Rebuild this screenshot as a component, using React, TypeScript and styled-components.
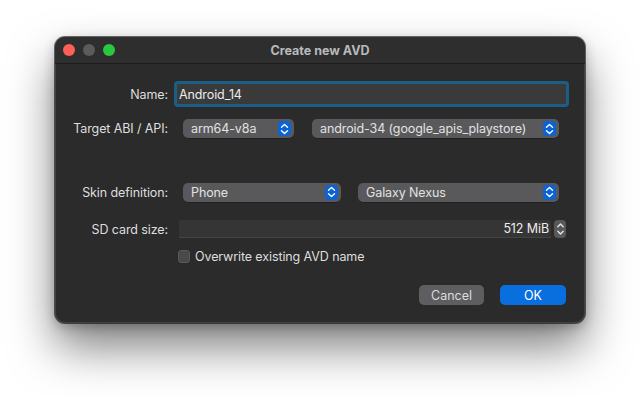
import React from "react";
import styled, { createGlobalStyle } from "styled-components";

const GlobalStyle = createGlobalStyle`
  html, body {
    margin: 0;
    padding: 0;
    background: #ffffff;
  }
  body {
    font-family: Inter, "Liberation Sans", sans-serif;
    -webkit-font-smoothing: antialiased;
  }
`;

const Page = styled.div`
  display: flex;
  justify-content: center;
  padding-top: 37px;
  height: 396px;
  box-sizing: border-box;
`;

const Window = styled.div`
  width: 530px;
  height: 286px;
  box-sizing: border-box;
  display: flex;
  flex-direction: column;
  background: #2b2b2c;
  border-radius: 10px;
  box-shadow: 0 0 0 1px rgba(0, 0, 0, 0.55), inset 0 0 0 1px rgba(255, 255, 255, 0.1),
    0 24px 46px rgba(0, 0, 0, 0.5), 0 4px 12px rgba(0, 0, 0, 0.25);
  overflow: hidden;
`;

const TitleBar = styled.div`
  position: relative;
  height: 26px;
  flex: none;
  display: flex;
  align-items: center;
  justify-content: center;
  background: #2e2e2f;
  border-bottom: 1px solid #1b1b1b;
`;

const Lights = styled.div`
  position: absolute;
  left: 8px;
  top: 7px;
  display: flex;
  gap: 8px;
`;

const Light = styled.span<{ $color: string }>`
  width: 12px;
  height: 12px;
  border-radius: 50%;
  background: ${(p) => p.$color};
`;

const Title = styled.div`
  font-size: 12.5px;
  font-weight: 700;
  color: #b9b9b9;
`;

const Body = styled.div`
  flex: 1;
  display: flex;
  flex-direction: column;
  padding-right: 16px;
`;

const Row = styled.div<{ $top: number; $height: number }>`
  display: grid;
  grid-template-columns: 113px 1fr;
  column-gap: 6px;
  align-items: center;
  margin-top: ${(p) => p.$top}px;
  height: ${(p) => p.$height}px;
`;

const Label = styled.div`
  text-align: right;
  font-size: 12.5px;
  letter-spacing: -0.1px;
  color: #dedede;
  white-space: nowrap;
`;

const Fields = styled.div<{ $inset: number; $gap?: number }>`
  display: flex;
  align-items: center;
  gap: ${(p) => p.$gap ?? 0}px;
  padding-left: ${(p) => p.$inset}px;
  height: 100%;
`;

const FocusRing = styled.div`
  flex: 1;
  height: 26px;
  box-sizing: border-box;
  border: 3px solid #1c5e85;
  border-radius: 4px;
  background: #3a3a3b;
  display: flex;
  align-items: center;
  padding-left: 2px;
`;

const TextValue = styled.span`
  font-size: 12.5px;
  letter-spacing: -0.1px;
  color: #ececec;
`;

const Select = styled.div<{ $width: number }>`
  width: ${(p) => p.$width}px;
  height: 19px;
  box-sizing: border-box;
  display: flex;
  align-items: center;
  justify-content: space-between;
  padding: 0 3px 0 8px;
  background: #59595b;
  border-radius: 5px;
  box-shadow: 0 0.5px 0 rgba(0, 0, 0, 0.4);
  font-size: 12.5px;
  letter-spacing: -0.1px;
  color: #e2e2e2;
  white-space: nowrap;
`;

const ChevronBox = styled.span`
  flex: none;
  width: 13px;
  height: 15px;
  border-radius: 4px;
  background: #0b64d6;
  display: flex;
  align-items: center;
  justify-content: center;
`;

const NumberField = styled.div`
  flex: 1;
  height: 18px;
  box-sizing: border-box;
  display: flex;
  align-items: center;
  justify-content: flex-end;
  padding-right: 2px;
  background: #353536;
  border-bottom: 1px solid #444446;
`;

const Stepper = styled.div`
  width: 12px;
  height: 18px;
  margin-left: 3px;
  margin-right: 3px;
  border-radius: 4px;
  background: #58585a;
  display: flex;
  align-items: center;
  justify-content: center;
`;

const CheckRow = styled.div`
  display: flex;
  align-items: center;
  gap: 5px;
  padding-left: 4px;
`;

const CheckBox = styled.span`
  width: 12px;
  height: 13px;
  box-sizing: border-box;
  border-radius: 3px;
  background: #4a4a4c;
  border: 1px solid #58585a;
`;

const Footer = styled.div`
  display: flex;
  justify-content: flex-end;
  gap: 16px;
  margin-top: 22px;
  padding-right: 3px;
`;

const Button = styled.div<{ $primary?: boolean }>`
  width: ${(p) => (p.$primary ? 66 : 65)}px;
  height: 20px;
  border-radius: 5px;
  display: flex;
  align-items: center;
  justify-content: center;
  font-size: 12.5px;
  color: ${(p) => (p.$primary ? "#ffffff" : "#dcdcdc")};
  background: ${(p) => (p.$primary ? "#0a6fde" : "#5e5e60")};
`;

const Chevrons: React.FC = () => (
  <svg width="9" height="12" viewBox="0 0 9 12" fill="none">
    <path d="M1.5 4.2 L4.5 1.5 L7.5 4.2" stroke="#fff" strokeWidth="1.4" strokeLinecap="round" strokeLinejoin="round" />
    <path d="M1.5 7.8 L4.5 10.5 L7.5 7.8" stroke="#fff" strokeWidth="1.4" strokeLinecap="round" strokeLinejoin="round" />
  </svg>
);

const StepperIcon: React.FC = () => (
  <svg width="9" height="16" viewBox="0 0 9 16" fill="none">
    <path d="M1.8 5.8 L4.5 3 L7.2 5.8" stroke="#e8e8e8" strokeWidth="1.3" strokeLinecap="round" strokeLinejoin="round" />
    <path d="M1.8 10.2 L4.5 13 L7.2 10.2" stroke="#e8e8e8" strokeWidth="1.3" strokeLinecap="round" strokeLinejoin="round" />
  </svg>
);

const Dropdown: React.FC<{ width: number; value: string }> = ({ width, value }) => (
  <Select $width={width}>
    <span>{value}</span>
    <ChevronBox>
      <Chevrons />
    </ChevronBox>
  </Select>
);

export default function App() {
  return (
    <>
      <GlobalStyle />
      <Page>
        <Window>
          <TitleBar>
            <Lights>
              <Light $color="#fe5f57" />
              <Light $color="#5b5b5d" />
              <Light $color="#28c840" />
            </Lights>
            <Title>Create new AVD</Title>
          </TitleBar>
          <Body>
            <Row $top={17} $height={26}>
              <Label>Name:</Label>
              <Fields $inset={0}>
                <FocusRing>
                  <TextValue>Android_14</TextValue>
                </FocusRing>
              </Fields>
            </Row>
            <Row $top={12} $height={19}>
              <Label>Target ABI / API:</Label>
              <Fields $inset={9} $gap={18}>
                <Dropdown width={111} value="arm64-v8a" />
                <Dropdown width={247} value="android-34 (google_apis_playstore)" />
              </Fields>
            </Row>
            <Row $top={44} $height={20}>
              <Label>Skin definition:</Label>
              <Fields $inset={9} $gap={17}>
                <Dropdown width={158} value="Phone" />
                <Dropdown width={201} value="Galaxy Nexus" />
              </Fields>
            </Row>
            <Row $top={18} $height={18}>
              <Label>SD card size:</Label>
              <Fields $inset={5}>
                <NumberField>
                  <TextValue>512 MiB</TextValue>
                </NumberField>
                <Stepper>
                  <StepperIcon />
                </Stepper>
              </Fields>
            </Row>
            <Row $top={11} $height={14}>
              <span />
              <CheckRow>
                <CheckBox />
                <Label>Overwrite existing AVD name</Label>
              </CheckRow>
            </Row>
            <Footer>
              <Button>Cancel</Button>
              <Button $primary>OK</Button>
            </Footer>
          </Body>
        </Window>
      </Page>
    </>
  );
}
